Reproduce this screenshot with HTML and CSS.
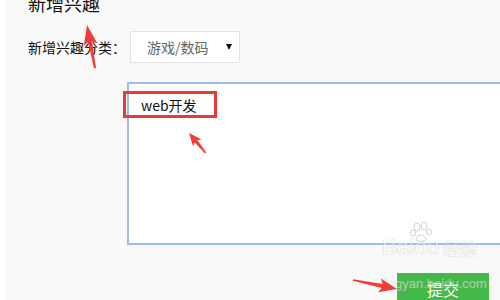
FILE: index.html
```html
<!DOCTYPE html>
<html lang="zh-CN">
<head>
    <meta charset="UTF-8">
    <title>新增兴趣</title>
    <link rel="stylesheet" href="styles.css">
</head>
<body>
    <div class="screen">
        <div class="page">
            <h2 class="title">新增兴趣</h2>
            <div class="field">
                <label class="field-label">新增兴趣分类：</label>
                <div class="select">
                    <span class="select-text">游戏/数码</span>
                    <span class="select-arrow"></span>
                </div>
            </div>
            <div class="editor">web开发</div>
            <button class="submit">提交</button>
        </div>

        <!-- watermark -->
        <div class="watermark">
            <div class="wm-logo">
                <span>Bai</span>
                <svg class="wm-paw" width="26" height="20" viewBox="0 0 26 20">
                    <ellipse cx="8" cy="5" rx="3" ry="4"/>
                    <ellipse cx="15" cy="4" rx="3" ry="4"/>
                    <ellipse cx="4" cy="11" rx="2.5" ry="3"/>
                    <ellipse cx="20" cy="10" rx="2.5" ry="3"/>
                    <path d="M7 18 C8 12 15 11 17 17 C17 20 8 20 7 18 Z"/>
                </svg>
                <span class="wm-du">du</span>
                <span class="wm-jy">经验</span>
            </div>
            <div class="wm-url">jingyan.baidu.com</div>
        </div>

        <!-- annotations -->
        <div class="mark-box"></div>
        <svg class="arrows" width="500" height="300" viewBox="0 0 500 300">
            <polygon transform="translate(87 25) rotate(-100.5)" points="0,0 -20,-7 -17,-2 -44,-1 -44,1 -17,2 -20,7"/>
            <polygon transform="translate(189 133) rotate(-130)" points="0,0 -13,-5.5 -11,-1.8 -26,-0.8 -26,0.8 -11,1.8 -13,5.5"/>
            <polygon transform="translate(397 289) rotate(11.6)" points="0,0 -18,-7 -15,-2 -45,-0.8 -45,0.8 -15,2 -18,7"/>
        </svg>
    </div>
</body>
</html>
```

FILE: styles.css
```css
body {
    margin: 0;
    padding: 0;
    background: #fff;
    font-family: "Noto Sans CJK SC", "Liberation Sans", sans-serif;
    color: #222;
}
.screen {
    position: relative;
    width: 500px;
    height: 300px;
    overflow: hidden;
}
.page {
    margin-left: 5px;
    height: 300px;
    padding-left: 23px;
    background: #f9f9f9;
    overflow: hidden;
}
.title {
    margin: -8px 0 0;
    font-size: 18px;
    line-height: 22px;
    font-weight: normal;
    color: #111;
}
.field {
    display: flex;
    align-items: center;
    margin-top: 17px;
}
.field-label {
    width: 102px;
    font-size: 14px;
    line-height: 20px;
    color: #111;
}
.select {
    display: flex;
    align-items: center;
    justify-content: space-between;
    box-sizing: border-box;
    width: 110px;
    height: 32px;
    padding: 0 7px 0 16px;
    background: #fff;
    border: 1px solid #e3e3e3;
}
.select-text {
    font-size: 14px;
    color: #666;
}
.select-arrow {
    width: 0;
    height: 0;
    border-left: 3.5px solid transparent;
    border-right: 3.5px solid transparent;
    border-top: 6px solid #111;
}
.editor {
    box-sizing: border-box;
    width: 400px;
    height: 163px;
    margin: 19px 0 0 99px;
    padding: 11px 12px;
    background: #fff;
    border: 2px solid #9dbcf3;
    font-size: 14px;
    line-height: 20px;
    color: #111;
}
.submit {
    display: block;
    width: 92px;
    height: 32px;
    margin: 28px 0 0 369px;
    padding: 0;
    border: none;
    background: #45b84a;
    color: #fff;
    font-family: "Noto Sans CJK SC", sans-serif;
    font-size: 16px;
    line-height: 32px;
    cursor: pointer;
}
.watermark {
    position: absolute;
    left: 382px;
    top: 222px;
    opacity: 0.45;
    color: #fff;
    text-shadow: 0 0 1px #999, 0 0 1px #999;
    font-family: "Liberation Sans", sans-serif;
}
.wm-logo {
    position: relative;
    display: flex;
    align-items: flex-end;
    height: 38px;
    font-size: 22px;
}
.wm-paw {
    position: absolute;
    left: 27px;
    top: 0;
    fill: #fff;
    stroke: #999;
    stroke-width: 1;
}
.wm-du {
    margin-left: 1px;
}
.wm-jy {
    margin-left: 4px;
    font-family: "Noto Sans CJK SC", sans-serif;
    font-size: 17px;
}
.wm-url {
    margin-top: 16px;
    font-size: 13px;
}
.mark-box {
    position: absolute;
    left: 123px;
    top: 91px;
    width: 88px;
    height: 21px;
    border: 3px solid #ec3838;
}
.arrows {
    position: absolute;
    left: 0;
    top: 0;
    fill: #f23b3b;
}
```
